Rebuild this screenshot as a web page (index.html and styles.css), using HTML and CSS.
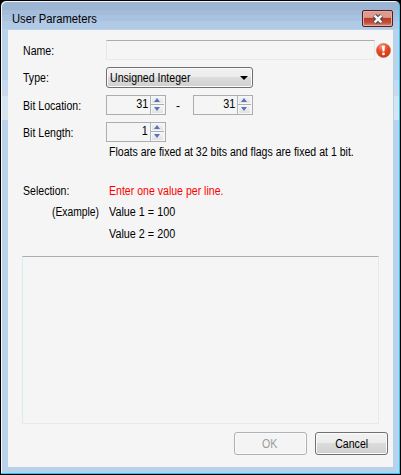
FILE: index.html
```html
<!DOCTYPE html>
<html lang="en">
<head>
<meta charset="utf-8">
<title>User Parameters</title>
<link rel="stylesheet" href="styles.css">
</head>
<body>
<div class="window">
  <header class="titlebar">
    <span class="title"><span class="t">User Parameters</span></span>
    <button class="close" aria-label="Close"><svg width="12" height="10" viewBox="0 0 12 10"><path d="M2.5 1.5 9.5 8.5M9.5 1.5 2.5 8.5" stroke="#484955" stroke-width="4.6"/><path d="M2.6 1.6 9.4 8.4M9.4 1.6 2.6 8.4" stroke="#f5f5f5" stroke-width="2.5"/></svg></button>
  </header>
  <main class="panel">
    <div class="row name-row"><label><span class="t">Name:</span></label><div class="input"></div>
      <svg class="error" width="15" height="15" viewBox="0 0 15 15"><defs><radialGradient id="g" cx=".4" cy=".2" r=".8"><stop offset="0" stop-color="#f6a080"/><stop offset=".5" stop-color="#e84a22"/><stop offset="1" stop-color="#c93b16"/></radialGradient></defs><circle cx="7.5" cy="7.5" r="7" fill="url(#g)" stroke="#c65a3c" stroke-width=".6"/><path d="M6 2.8h3l-.6 5.8H6.6z" fill="#fff"/><circle cx="7.5" cy="10.9" r="1.4" fill="#fff"/></svg>
    </div>
    <div class="row type-row"><label><span class="t">Type:</span></label><div class="select"><span class="t">Unsigned Integer</span><i class="arrow"></i></div></div>
    <div class="row location-row"><label><span class="t">Bit Location:</span></label>
      <div class="number"><span class="t">31</span><div class="spin"><i class="up"></i><i class="down"></i></div></div><span class="dash">-</span>
      <div class="number"><span class="t">31</span><div class="spin"><i class="up"></i><i class="down"></i></div></div></div>
    <div class="row length-row"><label><span class="t">Bit Length:</span></label>
      <div class="number"><span class="t">1</span><div class="spin"><i class="up"></i><i class="down"></i></div></div></div>
    <p class="note"><span class="t">Floats are fixed at 32 bits and flags are fixed at 1 bit.</span></p>
    <div class="hint selection"><span class="t">Selection:</span><span class="t red">Enter one value per line.</span></div>
    <div class="hint example"><span class="t indent">(Example)</span><span class="t value">Value 1 = 100</span></div>
    <div class="hint second"><span></span><span class="t value">Value 2 = 200</span></div>
    <div class="textarea"></div>
    <div class="actions"><button class="button disabled"><span class="t">OK</span></button><button class="button"><span class="t">Cancel</span></button></div>
  </main>
</div>
</body>
</html>
```

FILE: styles.css
```css
* { box-sizing: border-box; }
body { margin: 0; background: #000; font: 12px/14px "Liberation Sans", Arial, sans-serif; color: #000; overflow: hidden; }
button { font: inherit; padding: 0; }
.window {
  width: 401px; height: 475px; padding: 0 6px 6px;
  border: 1px solid #000; border-radius: 6px 6px 0 0;
  box-shadow: inset -1px -1px #28c8f4, inset 1px 1px #f3f7fb;
  background:
    linear-gradient(#c1dbf7 0 7px, #cbd9e7 7px 16px, #d3e4f3 16px 34px, #d7e6ed 34px 40px) 1px 79px / 6px 40px no-repeat,
    linear-gradient(#c1dbf7 0 7px, #cbd9e7 7px 16px, #d3e4f3 16px 34px, #d7e6ed 34px 40px) 393px 79px / 5px 40px no-repeat,
    linear-gradient(#9bb5d3 0 9px, #a2bcd9 9px 14px, #a8c2df 14px 20px, #b1cae6 20px 28px, #b9d1ea 28px);
}
.t { display: inline-block; white-space: nowrap; transform: scaleX(.88); transform-origin: left center; }
.titlebar { height: 29px; display: flex; justify-content: space-between; padding: 9px 1px 0 5px; }
.title { line-height: 18px; }
.title .t { transform: scaleX(.935); }
.close {
  width: 31px; height: 17px; display: flex; align-items: center; justify-content: center;
  border: 1px solid #4d202c; border-radius: 2px; box-shadow: inset 0 0 0 1px #e7aaa0;
  background: linear-gradient(#dc9b8c 0 40%, #cd7966 48%, #b83b26 50%, #bf513a 78%, #d7947e);
}
.panel { width: 385px; height: 437px; margin-left: 1px; background: #f5f5f5; padding-top: 10px; }
.row { display: grid; grid-template-columns: 83px auto; justify-content: start; padding-left: 15px; }
.row label { padding-top: 4px; }
.name-row { grid-template-columns: 83px 269px 15px; height: 27px; }
.input { height: 20px; border: 1px solid #e5eaed; border-top-color: #abadb3; border-left-color: #dbeaf0; background: #f5f5f5; }
.error { margin: 3px 0 0 1px; }
.type-row { height: 28px; }
.select, .button { border: 1px solid #707070; border-radius: 3px; box-shadow: inset 0 0 0 1px #fbfbfb; background: linear-gradient(#f2f2f2, #ebebeb 49%, #dcdcdc 50%, #cfcfcf); }
.select { width: 147px; height: 21px; display: flex; justify-content: space-between; padding: 3px 4px 0 3px; }
.arrow { width: 0; height: 0; margin-top: 5px; border: 4px solid transparent; border-top-color: #000; border-bottom: 0; }
.location-row { grid-template-columns: 83px 60px 27px 60px; height: 27px; }
.length-row { height: 0; }
.number { width: 60px; height: 20px; border: 1px solid #abadb3; display: flex; justify-content: flex-end; background: #f5f5f5; padding-right: 1px; }
.number .t { padding-top: 1px; transform: scaleX(.9); transform-origin: right center; margin-right: 2px; }
.spin { width: 14px; height: 18px; display: grid; grid-template-rows: 9px 9px; background: #abadb3; border-left: 1px solid #b4b5ba; }
.spin i { display: block; background: linear-gradient(#f3f4f5, #dfe2e6); border: 1px solid #f7f7f8; position: relative; }
.spin .up { margin-bottom: 1px; }
.spin i::after { content: ""; position: absolute; left: 2px; top: 1px; border: 3.5px solid transparent; border-top: 0; border-bottom: 4px solid #5d71b5; }
.spin .down::after { border-top: 4px solid #5d71b5; border-bottom: 0; }
.dash { text-align: center; padding: 4px 3px 0 0; }
.note { margin: 0; padding: 23px 0 0 101px; height: 62px; }
.hint { display: grid; grid-template-columns: 86px auto; padding-left: 15px; height: 22px; }
.selection { height: 21px; }
.indent { margin-left: 29px; transform: scaleX(.86); }
.value { transform: scaleX(.9); }
.red { color: #f00; }
.second { height: 19px; }
.textarea { width: 357px; height: 168px; margin: 10px 0 8px 14px; border: 1px solid #e5eaed; border-top-color: #abadb3; border-left-color: #dbeaf0; }
.actions { display: flex; gap: 8px; justify-content: flex-end; padding-right: 5px; }
.button { width: 73px; height: 23px; text-align: center; }
.button .t { transform-origin: center; }
.disabled { background: #f4f4f4; border-color: #adb2b5; color: #9b9b9b; }
.disabled .t { margin-right: 2px; }
```
